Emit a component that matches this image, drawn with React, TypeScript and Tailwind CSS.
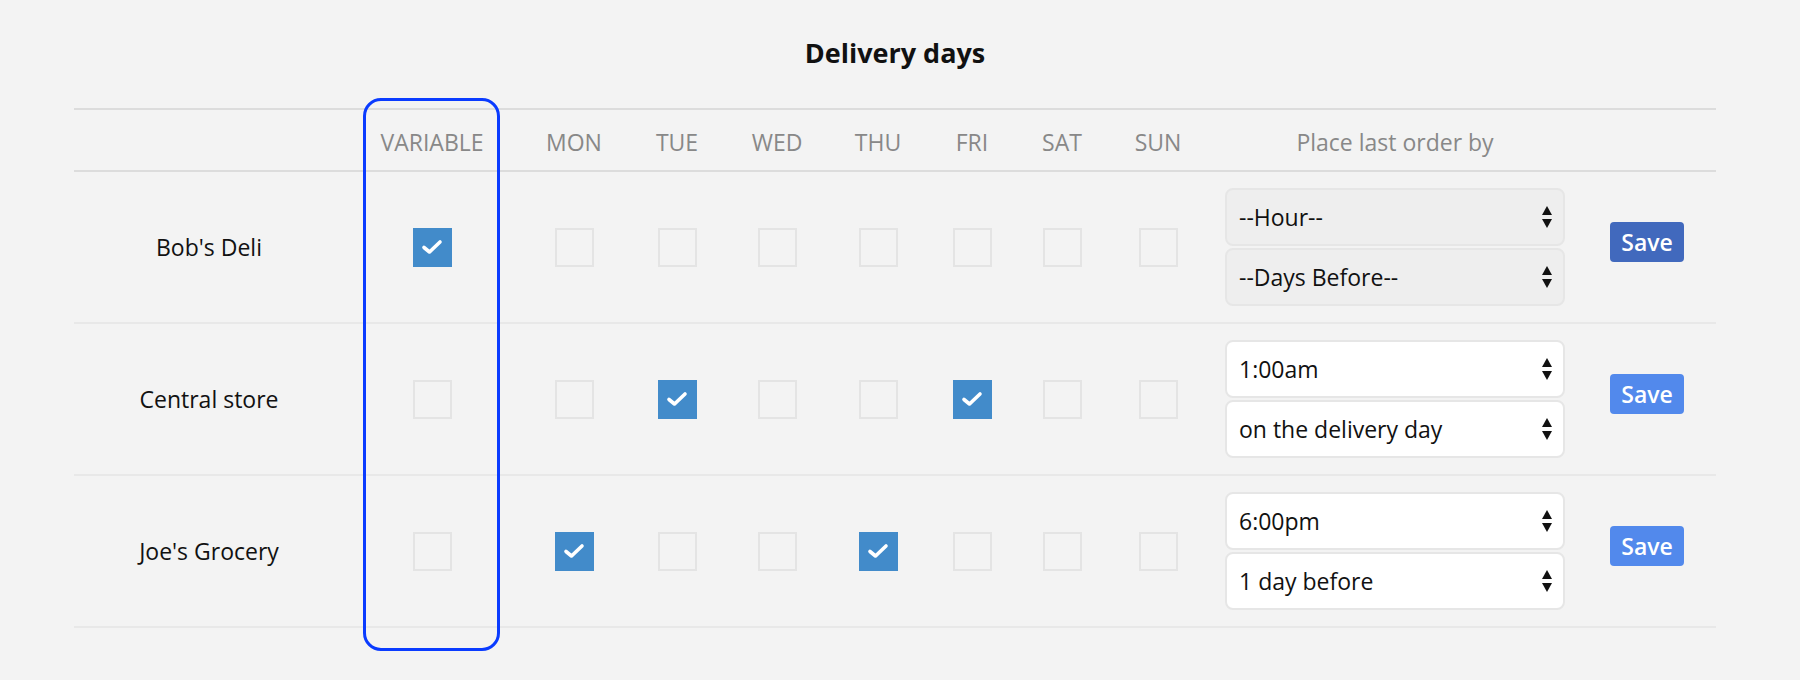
import React from "react";

type Row = {
  name: string;
  variable: boolean;
  days: boolean[];
  hour: string;
  before: string;
  disabled: boolean;
};

const DAYS = ["MON", "TUE", "WED", "THU", "FRI", "SAT", "SUN"];

const ROWS: Row[] = [
  {
    name: "Bob's Deli",
    variable: true,
    days: [false, false, false, false, false, false, false],
    hour: "--Hour--",
    before: "--Days Before--",
    disabled: true,
  },
  {
    name: "Central store",
    variable: false,
    days: [false, true, false, false, true, false, false],
    hour: "1:00am",
    before: "on the delivery day",
    disabled: false,
  },
  {
    name: "Joe's Grocery",
    variable: false,
    days: [true, false, false, true, false, false, false],
    hour: "6:00pm",
    before: "1 day before",
    disabled: false,
  },
];

const GRID =
  "grid grid-cols-[270px_176px_108px_98px_102px_100px_88px_92px_100px_374px_134px]";

function Check({ checked }: { checked: boolean }) {
  if (checked) {
    return (
      <div className="flex h-[39px] w-[39px] items-center justify-center bg-[#428bca]">
        <svg width="22" height="16" viewBox="0 0 22 16" fill="none">
          <path
            d="M3 8.5 L8.5 13 L19 3"
            stroke="white"
            strokeWidth="3.6"
            strokeLinecap="round"
            strokeLinejoin="round"
          />
        </svg>
      </div>
    );
  }
  return <div className="h-[39px] w-[39px] border-2 border-[#e4e4e4] bg-[#f3f3f3]" />;
}

function Arrows() {
  return (
    <svg
      className="pointer-events-none absolute right-[11px] top-1/2 -translate-y-1/2"
      width="10"
      height="22"
      viewBox="0 0 10 22"
    >
      <path d="M5 0 L10 9 L0 9 Z" fill="#111" />
      <path d="M0 13 L10 13 L5 22 Z" fill="#111" />
    </svg>
  );
}

function FakeSelect({ value, disabled }: { value: string; disabled: boolean }) {
  return (
    <div
      className={`relative flex h-[58px] w-[340px] items-center rounded-lg border-2 border-[#e6e6e6] pl-[12px] text-[23px] text-[#111] ${
        disabled ? "bg-[#eeeeee]" : "bg-white"
      }`}
    >
      {value}
      <Arrows />
    </div>
  );
}

export default function App() {
  return (
    <div className="min-h-[680px] bg-[#f3f3f3] font-['Open_Sans',sans-serif]">
      <h1 className="pt-[35px] pl-[74px] w-[1716px] text-center text-[27px] font-bold leading-[36px] text-[#111]">
        Delivery days
      </h1>

      <div className="relative ml-[74px] mt-[37px] w-[1642px]">
        <div className={`${GRID} h-[64px] items-center border-y-2 border-[#dcdcdc] pt-[4px] text-[23px] text-[#888]`}>
          <div />
          <div className="text-center">VARIABLE</div>
          {DAYS.map((d) => (
            <div key={d} className="text-center">
              {d}
            </div>
          ))}
          <div className="text-center">Place last order by</div>
          <div />
        </div>

        {ROWS.map((row) => (
          <div
            key={row.name}
            className={`${GRID} h-[152px] items-center border-b-2 border-[#e8e8e8] text-[23px] text-[#111]`}
          >
            <div className="text-center">{row.name}</div>
            <div className="flex justify-center">
              <Check checked={row.variable} />
            </div>
            {row.days.map((on, i) => (
              <div key={i} className="flex justify-center">
                <Check checked={on} />
              </div>
            ))}
            <div className="flex flex-col items-center gap-[2px]">
              <FakeSelect value={row.hour} disabled={row.disabled} />
              <FakeSelect value={row.before} disabled={row.disabled} />
            </div>
            <div className="mb-[10px] flex justify-start pl-[28px]">
              <button
                className={`h-[40px] w-[74px] rounded-[4px] text-[23px] font-semibold text-white ${
                  row.disabled ? "bg-[#4169bd]" : "bg-[#5289ec]"
                }`}
              >
                Save
              </button>
            </div>
          </div>
        ))}

        {/* highlight drawn round the VARIABLE column */}
        <div className="pointer-events-none absolute left-[289px] top-[-10px] h-[553px] w-[137px] rounded-[18px] border-[3px] border-[#0a3bff]" />
      </div>
    </div>
  );
}
